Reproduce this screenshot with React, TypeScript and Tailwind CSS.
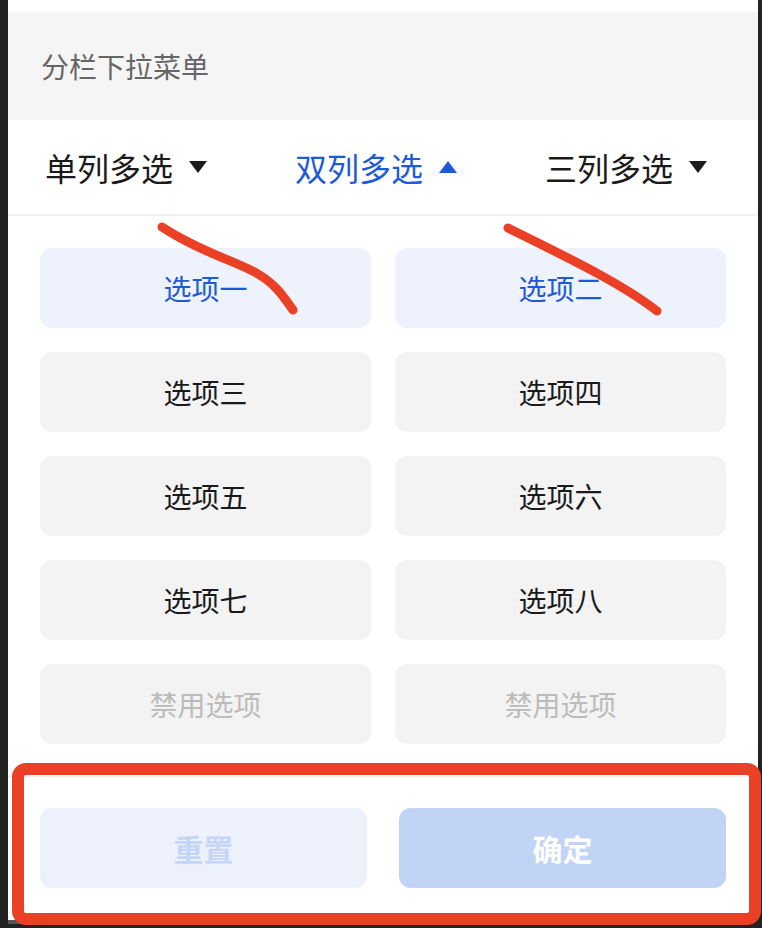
import React from "react";

const font = { fontFamily: '"Noto Sans CJK SC", "Noto Sans", sans-serif' };

function Tri({ up, color }: { up?: boolean; color: string }) {
  return (
    <svg width="18" height="13" viewBox="0 0 18 13" className="shrink-0">
      {up ? (
        <polygon points="9,0 18,12 0,12" fill={color} />
      ) : (
        <polygon points="0,0 18,0 9,12" fill={color} />
      )}
    </svg>
  );
}

const options = [
  { label: "选项一", state: "active" },
  { label: "选项二", state: "active" },
  { label: "选项三", state: "normal" },
  { label: "选项四", state: "normal" },
  { label: "选项五", state: "normal" },
  { label: "选项六", state: "normal" },
  { label: "选项七", state: "normal" },
  { label: "选项八", state: "normal" },
  { label: "禁用选项", state: "disabled" },
  { label: "禁用选项", state: "disabled" },
];

export default function App() {
  return (
    <div className="relative w-[762px] h-[928px] bg-[#222222] overflow-hidden" style={font}>
      <div className="ml-[8px] w-[750px] h-[920px] bg-white flex flex-col">
        <div className="h-[12px] bg-white" />
        <div className="h-[108px] bg-[#f5f5f5] flex items-center pl-[33px] text-[28px] text-[#666666]">
          分栏下拉菜单
        </div>
        <div className="h-[94px] grid grid-cols-3 border-b-2 border-[#f2f2f2] box-content">
          <div className="flex items-center justify-center gap-[16px] pr-[14px] text-[32px] text-[#1a1a1a]">
            <span>单列多选</span>
            <Tri color="#1a1a1a" />
          </div>
          <div className="flex items-center justify-center gap-[16px] pr-[14px] text-[32px] text-[#1e5ad7]">
            <span>双列多选</span>
            <Tri up color="#1e5ad7" />
          </div>
          <div className="flex items-center justify-center gap-[16px] pr-[14px] text-[32px] text-[#1a1a1a]">
            <span>三列多选</span>
            <Tri color="#1a1a1a" />
          </div>
        </div>
        <div className="grid grid-cols-2 gap-[24px] px-[32px] pt-[32px] pb-[32px]">
          {options.map((o, i) => (
            <div
              key={i}
              className={
                o.state === "active"
                  ? "h-[80px] rounded-[12px] bg-[#edf2fd] text-[#1e5ad7] text-[28px] flex items-center justify-center"
                  : o.state === "disabled"
                  ? "h-[80px] rounded-[12px] bg-[#f3f3f3] text-[#bbbbbb] text-[28px] flex items-center justify-center"
                  : "h-[80px] rounded-[12px] bg-[#f3f3f3] text-[#1a1a1a] text-[28px] flex items-center justify-center"
              }
            >
              {o.label}
            </div>
          ))}
        </div>
        <div className="border-t border-[#f0f0f0] flex gap-[32px] px-[32px] pt-[31px] pb-[32px]">
          <div className="flex-1 h-[80px] rounded-[12px] bg-[#ecf1fc] text-[#c5d5f6] text-[30px] font-bold flex items-center justify-center">
            重置
          </div>
          <div className="flex-1 h-[80px] rounded-[12px] bg-[#c2d4f5] text-white text-[30px] font-bold flex items-center justify-center">
            确定
          </div>
        </div>
      </div>
      <div className="ml-[8px] w-[16px] h-[4px] bg-[#555555]" />
      {/* annotation overlay */}
      <div className="absolute left-[12px] top-[763px] w-[749px] h-[162px] border-[12px] border-[#ea4026] rounded-[14px]" />
      <svg className="absolute left-0 top-0 pointer-events-none" width="762" height="928" viewBox="0 0 762 928">
        <path
          d="M162 227 C 200 252, 238 262, 258 274 S 284 298, 293 310"
          stroke="#ea4026"
          strokeWidth="9"
          strokeLinecap="round"
          fill="none"
        />
        <path
          d="M508 228 C 560 254, 620 282, 657 311"
          stroke="#ea4026"
          strokeWidth="9"
          strokeLinecap="round"
          fill="none"
        />
      </svg>
    </div>
  );
}
